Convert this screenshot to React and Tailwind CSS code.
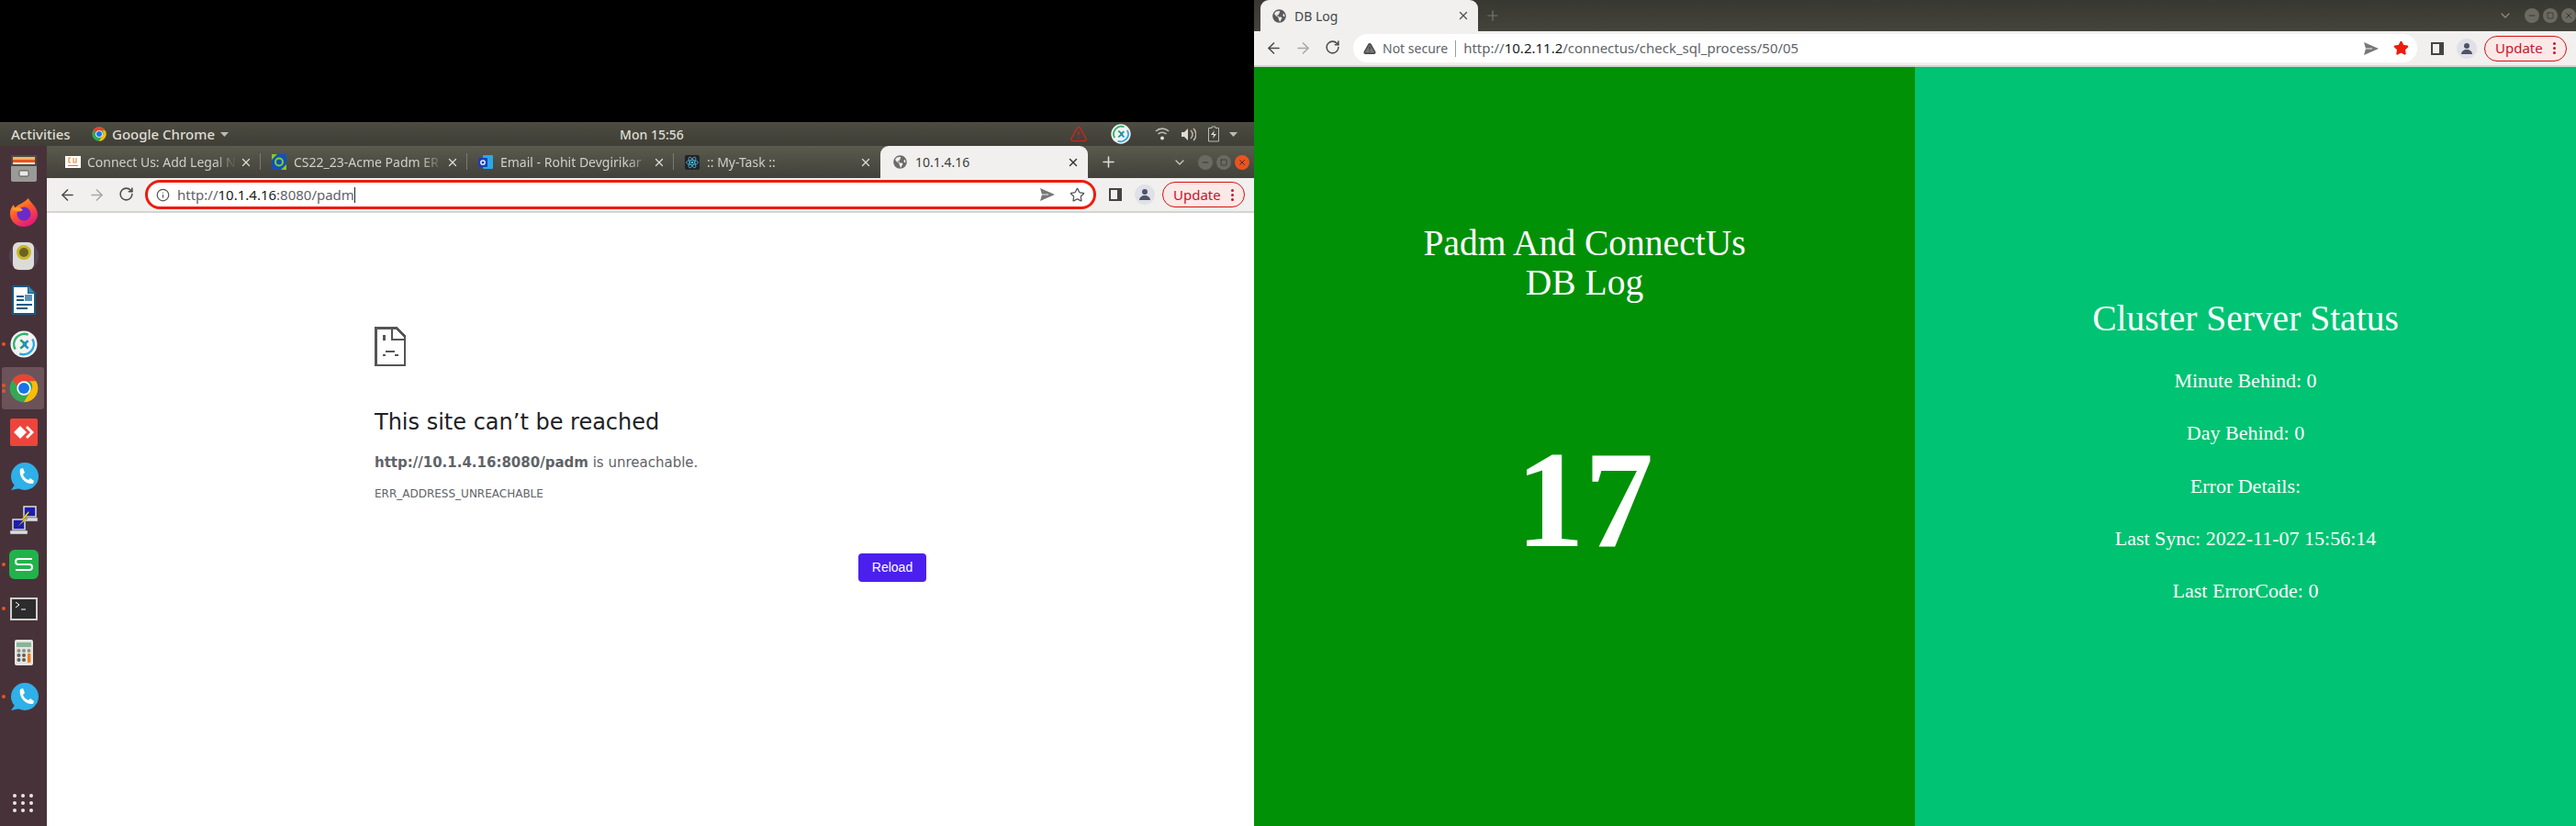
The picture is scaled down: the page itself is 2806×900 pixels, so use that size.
import { ArrowLeft, ArrowRight, RotateCw, Info, Star, X, Plus, ChevronDown, Minus, Square, TriangleAlert } from "lucide-react";
import { FaGlobeAmericas } from "react-icons/fa";

const UI = "font-['Noto_Sans','DejaVu_Sans',sans-serif]";

function ChromeLogo({ size = 32 }) {
  return (
    <svg width={size} height={size} viewBox="0 0 48 48">
      <circle cx="24" cy="24" r="23" fill="#34a853" />
      <path d="M24 1a23 23 0 0 1 19.9 11.5H24a11.5 11.5 0 0 0-10.9 8L5.2 10.2A23 23 0 0 1 24 1z" fill="#ea4335" />
      <path d="M43.9 12.5A23 23 0 0 1 24 47l10-17.2a11.5 11.5 0 0 0-.2-17.3z" fill="#fbbc05" />
      <circle cx="24" cy="24" r="11.5" fill="#fff" />
      <circle cx="24" cy="24" r="9" fill="#1a73e8" />
    </svg>
  );
}

function ZoomLogo({ size = 30 }) {
  return (
    <svg width={size} height={size} viewBox="0 0 32 32">
      <circle cx="16" cy="16" r="15.5" fill="#f2f2f2" />
      <path d="M6 22a12 12 0 0 1 15-17" fill="none" stroke="#2fb36c" strokeWidth="2.6" />
      <path d="M26 10a12 12 0 0 1-15 17" fill="none" stroke="#29a8e0" strokeWidth="2.6" />
      <path d="M12 11l6 5-6 5" fill="none" stroke="#1e9e5a" strokeWidth="2.6" />
      <path d="M21 12l-5 4 5 5" fill="none" stroke="#1f8fd0" strokeWidth="2.6" />
    </svg>
  );
}

function PhoneLogo() {
  return (
    <svg width="32" height="31" viewBox="0 0 32 31">
      <circle cx="17" cy="15" r="15" fill="#2fb0e8" />
      <path d="M2 30l5-7 5 5z" fill="#2fb0e8" />
      <path d="M12 7l3-1 2 5-2 2c1 3 3 5 6 6l2-2 4 3-1 3c-9 1-16-8-14-16z" fill="#fff" />
    </svg>
  );
}

const dockIcons = [
  {
    icon: (
      <svg width="28" height="29" viewBox="0 0 28 29">
        <rect x="0" y="0" width="28" height="29" rx="2" fill="#9a9a96" />
        <rect x="0" y="0" width="28" height="12" fill="#4c4a47" />
        <rect x="2" y="2" width="24" height="3" fill="#f6b26b" />
        <rect x="2" y="5" width="24" height="3" fill="#e95420" />
        <rect x="2" y="8" width="24" height="2" fill="#f3e5c8" />
        <rect x="9" y="17" width="10" height="6" rx="1" fill="#e8e8e6" stroke="#555" />
      </svg>
    ),
  },
  {
    icon: (
      <svg width="30" height="31" viewBox="0 0 30 31">
        <defs>
          <linearGradient id="ff" x1="0" y1="0" x2="0.6" y2="1">
            <stop offset="0" stopColor="#ffbd2e" />
            <stop offset="0.5" stopColor="#ff5a2c" />
            <stop offset="1" stopColor="#e3197a" />
          </linearGradient>
        </defs>
        <path d="M20 0c1 4 9 8 10 17a15 14 0 0 1-30 0c0-4 1-7 4-10 0 2 1 3 2 3 2-3 8-4 14-10z" fill="url(#ff)" />
        <circle cx="15" cy="17" r="7.5" fill="#6b2bc9" />
        <path d="M2 12c4-3 9-3 12 1-2 1-4 2-7 1z" fill="#ff9a2c" />
      </svg>
    ),
  },
  {
    icon: (
      <div className="w-[32px] h-[32px] rounded-full bg-[#54435a] flex items-center justify-center">
        <div className="w-[23px] h-[30px] rounded-[6px] bg-[#dcdcd6] flex items-start justify-center pt-[3px]">
          <div className="w-[16px] h-[16px] rounded-full bg-[#6b6320] border-[3px] border-[#c9b52e]" />
        </div>
      </div>
    ),
  },
  {
    icon: (
      <svg width="26" height="32" viewBox="0 0 26 32">
        <path d="M0 0h18l8 8v24H0z" fill="#175a84" />
        <path d="M2 2h15v7h7v21H2z" fill="#fff" />
        <path d="M18 1l7 7h-7z" fill="#3d85ad" />
        <rect x="5" y="11" width="8" height="2" fill="#175a84" />
        <rect x="5" y="15" width="8" height="2" fill="#175a84" />
        <rect x="14" y="10" width="8" height="7" fill="#5c93b8" />
        <rect x="5" y="20" width="17" height="2" fill="#175a84" />
        <rect x="5" y="24" width="12" height="2" fill="#175a84" />
      </svg>
    ),
  },
  { icon: <ZoomLogo />, dots: 1 },
  { icon: <ChromeLogo />, dots: 2, active: true },
  {
    icon: (
      <svg width="30" height="30" viewBox="0 0 30 30">
        <rect width="30" height="30" rx="2" fill="#ef443b" />
        <path d="M11 8l7 7-7 7-7-7z" fill="#fff" />
        <path d="M19 8l7 7-7 7-2-2 5-5-5-5z" fill="#fff" />
      </svg>
    ),
  },
  { icon: <PhoneLogo /> },
  {
    icon: (
      <svg width="32" height="32" viewBox="0 0 32 32">
        <rect x="16" y="1" width="13" height="11" fill="#1d1db0" stroke="#ddd" strokeWidth="1.5" />
        <rect x="14" y="13" width="17" height="4" fill="#ddd" stroke="#555" strokeWidth="0.5" />
        <rect x="4" y="15" width="13" height="11" fill="#1d1db0" stroke="#ddd" strokeWidth="1.5" />
        <rect x="1" y="27" width="19" height="4" fill="#ddd" stroke="#555" strokeWidth="0.5" />
        <path d="M21 6l-7 8 3 0-8 9 11-9-3 0 5-7z" fill="#ffeb00" stroke="#333" strokeWidth="0.4" />
      </svg>
    ),
  },
  {
    icon: (
      <svg width="32" height="32" viewBox="0 0 32 32">
        <rect width="32" height="32" rx="6" fill="#22b24c" />
        <path d="M25 10H10a3 3 0 0 0 0 6h12a3 3 0 0 1 0 6H7" fill="none" stroke="#fff" strokeWidth="2" />
      </svg>
    ),
    dots: 1,
  },
  {
    icon: (
      <div className="w-[30px] h-[25px] bg-[#2c2c2c] border-2 border-[#cfcfca] pl-[4px] pt-[3px]">
        <svg width="12" height="9" viewBox="0 0 12 9">
          <path d="M0 0l4 3-4 3" fill="none" stroke="#fff" />
          <path d="M6 8h5" stroke="#fff" />
        </svg>
      </div>
    ),
    dots: 1,
  },
  {
    icon: (
      <svg width="20" height="28" viewBox="0 0 20 28">
        <rect width="20" height="28" rx="2" fill="#e4e4e0" />
        <rect x="2" y="3" width="16" height="5" rx="1" fill="#87b598" />
        <g fill="#8f8f8b">
          <circle cx="4.5" cy="12" r="2" /><circle cx="10" cy="12" r="2" /><circle cx="15.5" cy="12" r="2" />
        </g>
        <g fill="#5f5f5c">
          <circle cx="4.5" cy="17" r="2" /><circle cx="10" cy="17" r="2" />
          <circle cx="4.5" cy="22" r="2" /><circle cx="10" cy="22" r="2" />
        </g>
        <rect x="14" y="15" width="3.4" height="10" rx="1" fill="#f07d1a" />
      </svg>
    ),
  },
  { icon: <PhoneLogo />, dots: 1 },
];

function Dock() {
  return (
    <div className="w-[51px] shrink-0 bg-[#48323a] flex flex-col">
      {dockIcons.map((item, i) => (
        <div key={i} className="relative h-[48px] flex items-center justify-center">
          {item.active && <div className="absolute left-[2px] top-[1px] w-[46px] h-[46px] rounded-[3px] bg-[#6b5359]" />}
          {item.dots > 0 && (
            <div className="absolute left-[2px] top-0 bottom-0 flex flex-col justify-center gap-[2px]">
              {Array.from({ length: item.dots }).map((_, d) => (
                <div key={d} className="w-[4px] h-[4px] rounded-full bg-[#e95420]" />
              ))}
            </div>
          )}
          <div className="relative">{item.icon}</div>
        </div>
      ))}
      <div className="mt-auto h-[50px] grid grid-cols-3 gap-x-[4px] gap-y-[4px] w-[24px] mx-auto content-center">
        {Array.from({ length: 9 }).map((_, i) => (
          <div key={i} className="w-[4px] h-[4px] rounded-full bg-[#e8e6e6]" />
        ))}
      </div>
    </div>
  );
}

function TopBar() {
  return (
    <div className={`h-[26px] shrink-0 bg-gradient-to-b from-[#4d4c42] to-[#3f3e36] flex items-center text-[15px] font-medium text-[#dedcd3] ${UI}`}>
      <span className="ml-[12px] w-[88px]">Activities</span>
      <ChromeLogo size={16} />
      <span className="ml-[6px]">Google Chrome</span>
      <svg className="ml-[6px]" width="9" height="5" viewBox="0 0 9 5"><path d="M0 0h9L4.500 5z" fill="#bdbbb3" /></svg>
      <span className="ml-[426px] w-[72px] whitespace-nowrap text-[14px]">Mon 15:56</span>
      <TriangleAlert className="ml-[418px] text-[#d5251c]" size={20} strokeWidth={1.5} />
      <div className="ml-[25px]"><ZoomLogo size={22} /></div>
      <svg className="ml-[26px]" width="16" height="14" viewBox="0 0 16 14">
        <path d="M1 4a10 10 0 0 1 14 0M3.500 7a6.500 6.500 0 0 1 9 0" fill="none" stroke="#bdbbb3" strokeWidth="1.6" />
        <circle cx="8" cy="11.500" r="2" fill="#dedcd3" />
      </svg>
      <svg className="ml-[13px]" width="16" height="15" viewBox="0 0 16 15">
        <path d="M0 5h3l4-4v13l-4-4H0z" fill="#dedcd3" />
        <path d="M10 3a6 6 0 0 1 0 9M13 1a9 9 0 0 1 0 13" fill="none" stroke="#bdbbb3" strokeWidth="1.5" />
      </svg>
      <svg className="ml-[13px]" width="12" height="18" viewBox="0 0 12 18">
        <path d="M4 1h4v1.500h3.500V17H.5V2.500H4z" fill="none" stroke="#bdbbb3" />
        <path d="M7 5L3 10h3l-1 4 4-5H6z" fill="#dedcd3" />
      </svg>
      <svg className="ml-[11px]" width="9" height="5" viewBox="0 0 9 5"><path d="M0 0h9L4.500 5z" fill="#bdbbb3" /></svg>
    </div>
  );
}

function Favicon({ kind }) {
  if (kind === "cu") {
    return (
      <svg width="17" height="13" viewBox="0 0 17 13">
        <rect width="17" height="13" fill="#fff" />
        <path d="M6 2H4v5h2M9 2v5h3V2" fill="none" stroke="#e58a3a" strokeWidth="1.2" />
        <rect x="3" y="10" width="11" height="1" fill="#e2684a" />
      </svg>
    );
  }
  if (kind === "cs") {
    return (
      <svg width="16" height="17" viewBox="0 0 16 17">
        <rect width="16" height="17" fill="#1450b8" />
        <path d="M0 0h6L0 6zM16 17h-6l6-6z" fill="#8ac81e" />
        <circle cx="8" cy="8.500" r="4" fill="none" stroke="#7fd02c" strokeWidth="2" />
      </svg>
    );
  }
  if (kind === "mail") {
    return (
      <svg width="16" height="17" viewBox="0 0 16 17">
        <rect x="5" y="1" width="11" height="15" rx="1" fill="#28a8ea" />
        <rect x="0" y="4" width="10" height="10" rx="1" fill="#1c3fb8" />
        <circle cx="5" cy="9" r="2.200" fill="none" stroke="#fff" strokeWidth="1.300" />
      </svg>
    );
  }
  return (
    <svg width="16" height="16" viewBox="0 0 16 16">
      <rect width="16" height="16" rx="2" fill="#20232a" />
      <g fill="none" stroke="#4fb8d8" strokeWidth="0.8">
        <ellipse cx="8" cy="8" rx="6.500" ry="2.500" />
        <ellipse cx="8" cy="8" rx="6.500" ry="2.500" transform="rotate(60 8 8)" />
        <ellipse cx="8" cy="8" rx="6.500" ry="2.500" transform="rotate(120 8 8)" />
      </g>
      <circle cx="8" cy="8" r="1.300" fill="#4fb8d8" />
    </svg>
  );
}

function Tab({ kind, title, sep = true }) {
  return (
    <div className="w-[225px] h-[35px] shrink-0 flex items-center relative">
      <div className="w-[36px] pl-[12px] shrink-0 flex"><Favicon kind={kind} /></div>
      <span className="w-[163px] shrink-0 whitespace-nowrap text-[14px] text-[#cfcec8] [mask-image:linear-gradient(to_right,black_85%,transparent)]">{title}</span>
      <X size={14} strokeWidth={2.2} className="ml-[3px] text-[#dedcd6]" />
      {sep && <div className="absolute right-0 top-[8px] h-[18px] w-px bg-[#7a7a70]" />}
    </div>
  );
}

function WinButtons({ focused }) {
  const base = "w-[16px] h-[16px] rounded-full flex items-center justify-center";
  return (
    <div className="flex gap-[4px] text-[#2c2c28]">
      <div className={`${base} bg-[#6a6a62]`}><Minus size={10} strokeWidth={2} /></div>
      <div className={`${base} bg-[#6a6a62]`}><Square size={8} strokeWidth={2} /></div>
      <div className={`${base} ${focused ? "bg-[#e95420]" : "bg-[#6a6a62]"}`}><X size={10} strokeWidth={2} /></div>
    </div>
  );
}

function SendIcon() {
  return (
    <svg width="16" height="14" viewBox="0 0 16 14">
      <path d="M0 0l16 7-16 7 2-7z" fill="#777" />
      <path d="M2 7h7" stroke="#f1f0ee" strokeWidth="1" />
    </svg>
  );
}

function Tools() {
  return (
    <>
      <div className="w-[32px] flex justify-center">
        <svg width="14" height="14" viewBox="0 0 14 14"><path d="M0 0h14v14H0zM2 2v10h7V2z" fill="#444" fillRule="evenodd" /></svg>
      </div>
      <div className="w-[32px] flex justify-center">
        <div className="w-[22px] h-[22px] rounded-full bg-[#e0e1e8] flex items-center justify-center">
          <svg width="14" height="14" viewBox="0 0 14 14">
            <circle cx="7" cy="4" r="3" fill="#4f5468" />
            <path d="M1 13c0-3 3-5 6-5s6 2 6 5z" fill="#4f5468" />
          </svg>
        </div>
      </div>
      <div className="ml-[3px] w-[90px] h-[28px] rounded-full bg-[#fbe9e8] border border-[#d80f0f] flex items-center text-[15px] text-[#c9142a]">
        <span className="ml-[11px]">Update</span>
        <div className="ml-auto mr-[11px] flex flex-col gap-[2px]">
          <div className="w-[3px] h-[3px] rounded-full bg-[#c9142a]" />
          <div className="w-[3px] h-[3px] rounded-full bg-[#c9142a]" />
          <div className="w-[3px] h-[3px] rounded-full bg-[#c9142a]" />
        </div>
      </div>
    </>
  );
}

function Nav() {
  return (
    <div className="flex text-[#4d4d4d]">
      <div className="w-[32px] flex justify-center"><ArrowLeft size={19} strokeWidth={2} /></div>
      <div className="w-[32px] flex justify-center text-[#a8a8a8]"><ArrowRight size={19} strokeWidth={2} /></div>
      <div className="w-[32px] flex justify-center"><RotateCw size={17} strokeWidth={2.2} /></div>
    </div>
  );
}

function LeftWindow() {
  return (
    <div className="flex-1 flex flex-col bg-white min-w-0">
      <div className={`h-[35px] shrink-0 bg-gradient-to-b from-[#5a5a4e] to-[#42413a] flex items-end pl-[8px] ${UI}`}>
        <Tab kind="cu" title="Connect Us: Add Legal N" />
        <Tab kind="cs" title="CS22_23-Acme Padm ER" />
        <Tab kind="mail" title="Email - Rohit Devgirikar" />
        <Tab kind="react" title=":: My-Task ::" sep={false} />
        <div className="w-[226px] h-[35px] shrink-0 rounded-t-[9px] bg-[#f1f0ee] flex items-center text-[14px] text-[#3c3c3c]">
          <FaGlobeAmericas size={15} className="ml-[14px] text-[#6b6b6b]" />
          <span className="ml-[9px]">10.1.4.16</span>
          <X size={14} strokeWidth={2.4} className="ml-auto mr-[9px] text-[#333]" />
        </div>
        <div className="h-[35px] flex items-center">
          <Plus size={19} strokeWidth={2} className="ml-[13px] text-[#dedcd6]" />
          <ChevronDown size={16} strokeWidth={2} className="ml-[60px] text-[#c8c8c0]" />
          <div className="ml-[12px]"><WinButtons focused /></div>
        </div>
      </div>
      <div className={`h-[38px] shrink-0 bg-[#f1f0ee] border-b-2 border-[#d4d4d2] flex items-center pl-[6px] ${UI}`}>
        <Nav />
        <div className="ml-[5px] w-[1036px] h-[32px] rounded-full bg-white border-[3px] border-[#ec1c0c] flex items-center">
          <Info size={15} strokeWidth={2} className="ml-[9px] text-[#555]" />
          <div className="ml-[8px] text-[15px] text-[#5f6368] whitespace-nowrap flex items-center">
            <span>http://</span><span className="text-[#202124]">10.1.4.16</span><span>:8080/padm</span>
            <div className="w-px h-[17px] bg-[#222]" />
          </div>
          <div className="ml-auto flex items-center">
            <SendIcon />
            <Star size={17} strokeWidth={1.8} className="ml-[16px] mr-[9px] text-[#555]" />
          </div>
        </div>
        <div className="ml-[5px] flex items-center"><Tools /></div>
      </div>
      <div className="flex-1 pl-[357px] pt-[124px]">
        <svg width="34" height="43" viewBox="0 0 34 43" shapeRendering="crispEdges">
          <path d="M1.250 1.250H24L32.750 10V41.750H1.250z" fill="none" stroke="#555" strokeWidth="2.500" />
          <path d="M19 1.250V14H32.750" fill="none" stroke="#555" strokeWidth="2.500" />
          <rect x="9" y="9" width="3" height="6" fill="#555" />
          <path d="M8.500 32v-2H12v-4h10v4h3.500v2H22v-4H12v4z" fill="#555" />
        </svg>
        <h1 className="mt-[46px] text-[24px] leading-[30px] text-[#202124] font-['DejaVu_Sans',sans-serif] whitespace-nowrap">This site can’t be reached</h1>
        <p className="mt-[19px] text-[15px] leading-[20px] text-[#5f6368] font-['DejaVu_Sans',sans-serif] whitespace-nowrap">
          <b>http://10.1.4.16:8080/padm</b> is unreachable.
        </p>
        <p className="mt-[16px] text-[12px] leading-[16px] text-[#5f6368] font-['DejaVu_Sans',sans-serif] whitespace-nowrap">ERR_ADDRESS_UNREACHABLE</p>
        <button className="mt-[57px] ml-[527px] block w-[74px] h-[31px] rounded-[4px] bg-[#4b1fee] text-white text-[14px] font-['Liberation_Sans',sans-serif]">Reload</button>
      </div>
    </div>
  );
}

function RightWindow() {
  return (
    <div className="w-[1440px] h-[900px] shrink-0 flex flex-col">
      <div className={`h-[34px] shrink-0 bg-gradient-to-b from-[#383832] to-[#44443c] flex items-end pl-[7px] ${UI}`}>
        <div className="w-[241px] h-[34px] rounded-t-[9px] bg-[#f1f0ee] flex items-center text-[14px] text-[#45474a]">
          <FaGlobeAmericas size={15} className="ml-[13px] text-[#5a5a5a]" />
          <span className="ml-[9px]">DB Log</span>
          <X size={14} strokeWidth={2.4} className="ml-auto mr-[9px] text-[#555]" />
        </div>
        <div className="h-[34px] flex items-center">
          <Plus size={18} strokeWidth={1.6} className="ml-[7px] text-[#77776e]" />
          <ChevronDown size={16} strokeWidth={2} className="ml-[1086px] text-[#8a8a82]" />
          <div className="ml-[13px]"><WinButtons /></div>
        </div>
      </div>
      <div className={`h-[39px] shrink-0 bg-[#f1f0ee] border-b-2 border-[#d4d4d2] flex items-center pl-[5px] ${UI}`}>
        <Nav />
        <div className="ml-[7px] w-[1159px] h-[31px] rounded-full bg-white flex items-center">
          <TriangleAlert size={14} strokeWidth={2.5} className="ml-[11px] text-[#444] fill-[#777]" />
          <span className="ml-[7px] text-[14px] text-[#5f6368] whitespace-nowrap">Not secure</span>
          <div className="ml-[8px] w-px h-[18px] bg-[#9a9a9a]" />
          <div className="ml-[8px] text-[15px] text-[#5f6368] whitespace-nowrap">
            http://<span className="text-[#202124]">10.2.11.2</span>/connectus/check_sql_process/50/05
          </div>
          <div className="ml-auto flex items-center">
            <SendIcon />
            <Star size={17} className="ml-[16px] mr-[9px] text-[#ee1c0c] fill-[#ee1c0c]" />
          </div>
        </div>
        <div className="ml-[6px] flex items-center"><Tools /></div>
      </div>
      <div className="flex-1 flex text-white text-center font-['Liberation_Serif',serif]">
        <div className="w-[720px] bg-[#009107] flex flex-col items-center pt-[171px]">
          <h1 className="text-[39.500px] leading-[43px] w-[500px]">Padm And ConnectUs<br />DB Log</h1>
          <div className="mt-[134px] text-[150px] leading-[160px] font-bold">17</div>
        </div>
        <div className="w-[720px] bg-[#00c373] flex flex-col items-center pt-[251px]">
          <h2 className="text-[39.500px] leading-[46px]">Cluster Server Status</h2>
          <div className="mt-[32px] flex flex-col gap-[32.300px] text-[22px] leading-[25px] whitespace-nowrap">
            <p>Minute Behind: 0</p>
            <p>Day Behind: 0</p>
            <p>Error Details:</p>
            <p>Last Sync: 2022-11-07 15:56:14</p>
            <p>Last ErrorCode: 0</p>
          </div>
        </div>
      </div>
    </div>
  );
}

export default function App() {
  return (
    <div className="w-[2806px] h-[900px] flex overflow-hidden bg-black">
      <div className="w-[1366px] h-[900px] shrink-0 flex flex-col">
        <div className="h-[133px] shrink-0 bg-black" />
        <TopBar />
        <div className="flex-1 flex min-h-0">
          <Dock />
          <LeftWindow />
        </div>
      </div>
      <RightWindow />
    </div>
  );
}
